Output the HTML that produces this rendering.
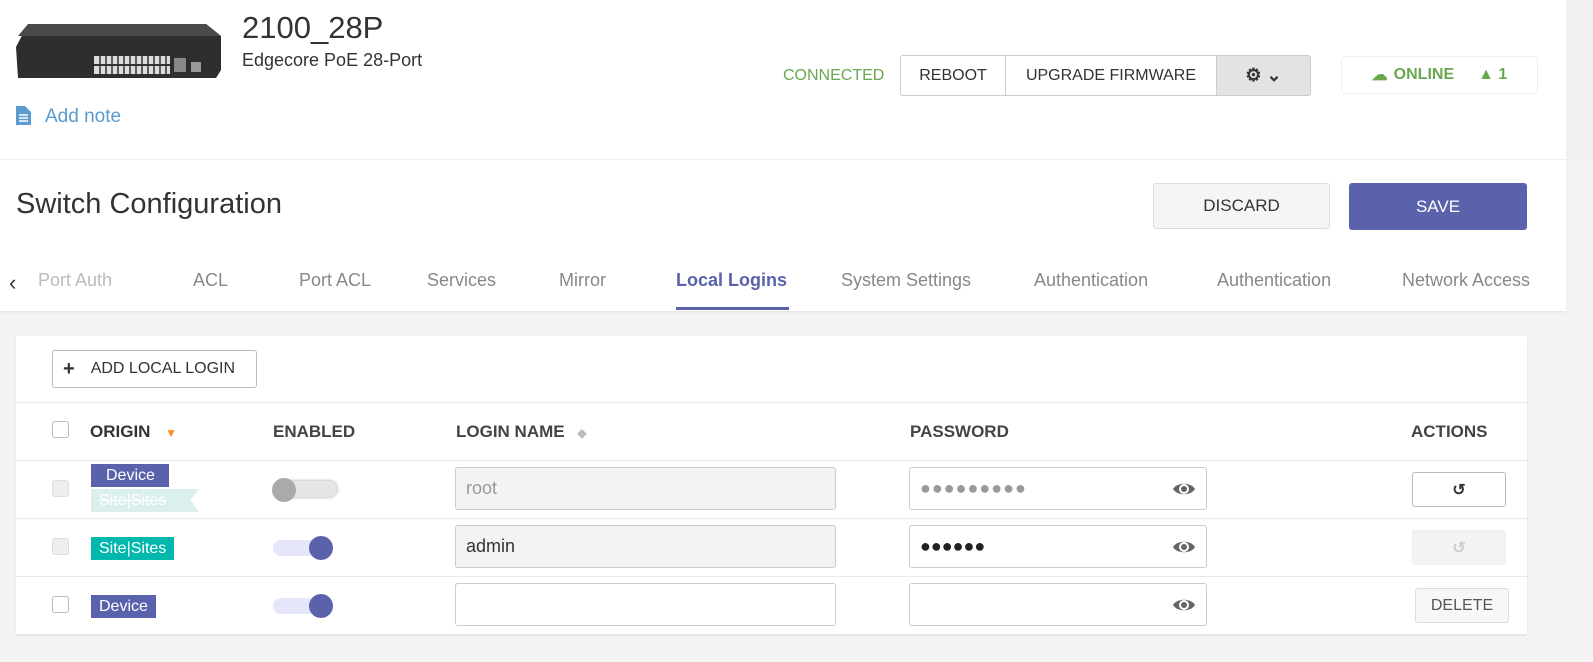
<!DOCTYPE html>
<html><head><meta charset="utf-8"><style>
*{box-sizing:border-box;margin:0;padding:0}
body{width:1593px;height:662px;overflow:hidden;background:#f3f3f3;font-family:"Liberation Sans",sans-serif;color:#333;position:relative}
.abs{position:absolute}
.top{position:absolute;left:0;top:0;width:1566px;height:311px;background:#fff}
.sb{position:absolute;left:1566px;top:0;width:27px;height:160px;background:#f1f1f1}
.btn{position:absolute;border:1px solid #ccc;background:#fff;font-size:16px;display:flex;align-items:center;justify-content:center;color:#333}
.tab{position:absolute;top:270px;font-size:18px;color:#888}
.card{position:absolute;left:16px;top:336px;width:1511px;height:298px;background:#fff;box-shadow:0 1px 2px rgba(0,0,0,.1)}
.hl{position:absolute;left:16px;width:1511px;height:1px;background:#eaeaea}
.th{position:absolute;top:422px;font-size:17px;font-weight:bold;color:#444}
.cb{position:absolute;left:52px;width:17px;height:17px;border:1px solid #bbb;border-radius:3px;background:#fff}
.cb.dis{background:#eee;border-color:#ddd}
.tag{position:absolute;color:#fff;font-size:16px;padding:0 8px;height:23px;line-height:23px}
.inp{position:absolute;height:43px;border:1px solid #ccc;border-radius:3px;background:#fff;font-size:18px;padding-left:10px;line-height:41px;color:#333}
.tr{position:absolute;width:60px;height:16px;border-radius:8px;background:#e6e6fb}
.knob{position:absolute;width:24px;height:24px;border-radius:50%;background:#5a62ab}
.eye{position:absolute;right:10px;top:12px}
</style></head><body>
<div class="top"></div><div class="sb"></div>
<div class="abs" style="left:0;top:159px;width:1566px;height:1px;background:#eee"></div>
<!-- switch image -->
<svg class="abs" style="left:16px;top:22px" width="206" height="60" viewBox="0 0 206 60"><path d="M12 2H190L205 14V48L200 56H2L0 25Z" fill="#2e2e2e"/><path d="M12 2H190L205 14H2Z" fill="#4a4a4a"/><rect x="78" y="34" width="76" height="18" fill="#ddd"/><path d="M78 43H154" stroke="#333" stroke-width="2"/><path d="M84 34V52M90 34V52M96 34V52M102 34V52M108 34V52M114 34V52M120 34V52M126 34V52M132 34V52M138 34V52M144 34V52M150 34V52" stroke="#333" stroke-width="1.5"/><rect x="158" y="36" width="12" height="14" fill="#888"/><rect x="175" y="40" width="10" height="10" fill="#999"/></svg>
<div class="abs" style="left:242px;top:10px;font-size:31px;color:#333">2100_28P</div>
<div class="abs" style="left:242px;top:50px;font-size:18px;color:#333">Edgecore PoE 28-Port</div>
<svg class="abs" style="left:16px;top:106px" width="15" height="19" viewBox="0 0 15 19"><path d="M0 0H9L15 6V19H0Z" fill="#5a9ccf"/><path d="M3 9H12M3 12H12M3 15H12" stroke="#fff" stroke-width="1.5"/></svg>
<div class="abs" style="left:45px;top:106px;font-size:19px;color:#5a9ccf">Add note</div>
<div class="abs" style="left:783px;top:67px;font-size:16px;color:#6aa84f">CONNECTED</div>
<div class="btn" style="left:900px;top:55px;width:106px;height:41px;border-radius:3px 0 0 3px">REBOOT</div>
<div class="btn" style="left:1005px;top:55px;width:212px;height:41px">UPGRADE FIRMWARE</div>
<div class="btn" style="left:1216px;top:55px;width:95px;height:41px;background:#e3e3e3;border-radius:0 3px 3px 0;font-size:18px;font-weight:bold">⚙ ⌄</div>
<div class="btn" style="left:1341px;top:56px;width:197px;height:38px;border-color:#eee;border-radius:4px;font-weight:bold;color:#6aa84f"><span style="margin-right:6px">☁</span>ONLINE<span style="margin-left:24px">▲ 1</span></div>
<div class="abs" style="left:16px;top:188px;font-size:29px;color:#333">Switch Configuration</div>
<div class="btn" style="left:1153px;top:183px;width:177px;height:46px;background:#f5f5f5;border-color:#ddd;border-radius:3px;font-size:17px">DISCARD</div>
<div class="btn" style="left:1349px;top:183px;width:178px;height:47px;background:#5a62ab;border-color:#5a62ab;color:#fff;border-radius:3px;font-size:17px">SAVE</div>
<div class="tab" style="left:9px;color:#333;font-size:22px;top:270px">‹</div>
<div class="tab" style="left:38px;color:#bbb">Port Auth</div>
<div class="tab" style="left:193px">ACL</div>
<div class="tab" style="left:299px">Port ACL</div>
<div class="tab" style="left:427px">Services</div>
<div class="tab" style="left:559px">Mirror</div>
<div class="tab" style="left:676px;color:#5a62ab;font-weight:bold">Local Logins</div>
<div class="abs" style="left:676px;top:307px;width:113px;height:3px;background:#5a62ab"></div>
<div class="tab" style="left:841px">System Settings</div>
<div class="tab" style="left:1034px">Authentication</div>
<div class="tab" style="left:1217px">Authentication</div>
<div class="tab" style="left:1402px">Network Access</div>
<div class="abs" style="left:0;top:311px;width:1566px;height:3px;background:linear-gradient(rgba(0,0,0,.06),rgba(0,0,0,0))"></div>
<div class="card"></div>
<div class="btn" style="left:52px;top:350px;width:205px;height:38px;border-radius:3px;border-color:#bbb;justify-content:flex-start;padding-left:10px"><b style="font-size:20px;margin-right:16px">+</b>ADD LOCAL LOGIN</div>
<div class="hl" style="top:402px"></div>
<div class="hl" style="top:460px"></div>
<div class="hl" style="top:518px"></div>
<div class="hl" style="top:576px"></div>
<div class="cb" style="top:421px"></div>
<div class="th" style="left:90px;color:#333">ORIGIN <span style="color:#f5922f;font-size:12px;margin-left:10px">▼</span></div>
<div class="th" style="left:273px">ENABLED</div>
<div class="th" style="left:456px">LOGIN NAME <span style="color:#bbb;font-size:12px;margin-left:8px">◆</span></div>
<div class="th" style="left:910px">PASSWORD</div>
<div class="th" style="left:1411px">ACTIONS</div>
<!-- row1 -->
<div class="cb dis" style="top:480px"></div>
<div class="tag" style="left:91px;top:464px;background:#5a62ab;padding-left:15px;width:78px">Device</div>
<div class="tag" style="left:91px;top:489px;background:#dbefed;text-decoration:line-through;width:108px;clip-path:polygon(0 0,100% 0,92% 50%,100% 100%,0 100%)">Site|Sites</div>
<div class="tr" style="left:277px;top:481px;background:#e6e6e6;box-shadow:0 0 3px #99a"></div>
<div class="knob" style="left:272px;top:478px;background:#aaa"></div>
<div class="inp" style="left:455px;top:467px;width:381px;background:#f3f3f3;color:#999">root</div>
<div class="inp" style="left:909px;top:467px;width:298px;color:#999;letter-spacing:1px">●●●●●●●●●<svg class="eye" width="24" height="18" viewBox="0 0 24 18"><path d="M1 9C5 2 19 2 23 9C19 16 5 16 1 9Z" fill="#666"/><circle cx="12" cy="9" r="5" fill="#fff"/><circle cx="12" cy="9" r="3" fill="#666"/></svg></div>
<div class="btn" style="left:1412px;top:472px;width:94px;height:35px;border-color:#bbb;border-radius:3px;font-weight:bold">↺</div>
<!-- row2 -->
<div class="cb dis" style="top:538px"></div>
<div class="tag" style="left:91px;top:537px;background:#00b8ae">Site|Sites</div>
<div class="tr" style="left:273px;top:540px"></div>
<div class="knob" style="left:309px;top:536px"></div>
<div class="inp" style="left:455px;top:525px;width:381px;background:#f3f3f3">admin</div>
<div class="inp" style="left:909px;top:525px;width:298px;color:#222">●●●●●●<svg class="eye" width="24" height="18" viewBox="0 0 24 18"><path d="M1 9C5 2 19 2 23 9C19 16 5 16 1 9Z" fill="#666"/><circle cx="12" cy="9" r="5" fill="#fff"/><circle cx="12" cy="9" r="3" fill="#666"/></svg></div>
<div class="btn" style="left:1412px;top:530px;width:94px;height:35px;border-color:#eee;background:#f3f3f3;color:#ccc;border-radius:3px;font-weight:bold">↺</div>
<!-- row3 -->
<div class="cb" style="top:596px"></div>
<div class="tag" style="left:91px;top:595px;background:#5a62ab">Device</div>
<div class="tr" style="left:273px;top:598px"></div>
<div class="knob" style="left:309px;top:594px"></div>
<div class="inp" style="left:455px;top:583px;width:381px"></div>
<div class="inp" style="left:909px;top:583px;width:298px"><svg class="eye" width="24" height="18" viewBox="0 0 24 18"><path d="M1 9C5 2 19 2 23 9C19 16 5 16 1 9Z" fill="#666"/><circle cx="12" cy="9" r="5" fill="#fff"/><circle cx="12" cy="9" r="3" fill="#666"/></svg></div>
<div class="btn" style="left:1415px;top:588px;width:94px;height:35px;border-color:#ddd;background:#f7f7f7;color:#555;border-radius:3px">DELETE</div>
</body></html>
